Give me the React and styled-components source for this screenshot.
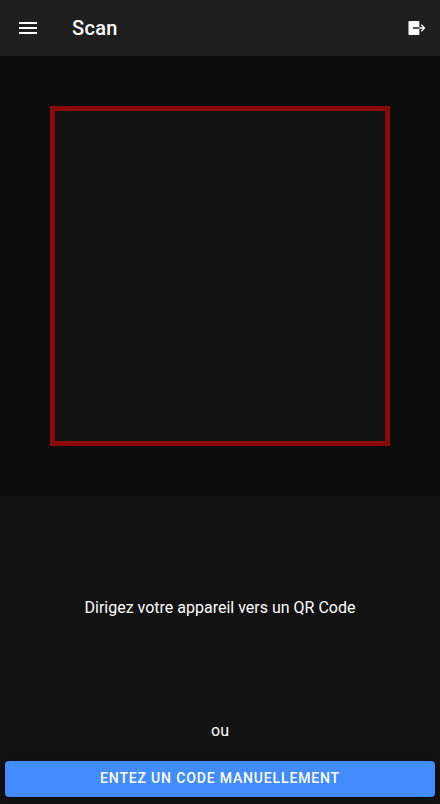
import React from "react";
import styled, { createGlobalStyle } from "styled-components";

const GlobalStyle = createGlobalStyle`
  * { box-sizing: border-box; }
  body { margin: 0; background: #121212; font-family: Roboto, sans-serif; color: #fff; }
`;
const Page = styled.div`
  display: flex;
  flex-direction: column;
  height: 100vh;
  overflow: hidden;
`;
const Toolbar = styled.header`
  flex: none;
  display: flex;
  align-items: center;
  height: 56px;
  padding: 0 13px 0 16px;
  background: #1f1f1f;
`;
const Title = styled.h1`
  flex: 1;
  margin: 0 0 0 32px;
  font-size: 20px;
  font-weight: 500;
  line-height: 24px;
  letter-spacing: 0.3px;
`;
const IconButton = styled.button`
  display: flex;
  padding: 0;
  border: 0;
  background: none;
  color: #fff;
`;
const Viewfinder = styled.div`
  flex: none;
  height: 440px;
  border: 50px solid #0d0d0d;
`;
const Target = styled.div`
  height: 340px;
  border: 5px solid #890909;
`;
const Message = styled.p`
  flex: 1;
  display: flex;
  align-items: center;
  justify-content: center;
  margin: 0;
  padding-bottom: 2px;
  font-size: 16px;
  line-height: 20px;
`;
const Separator = styled.p`
  flex: none;
  margin: 0 0 20px;
  text-align: center;
  font-size: 16px;
  line-height: 20px;
`;
const Action = styled.button`
  flex: none;
  height: 36px;
  margin: 0 5px 7px;
  padding: 0 0 2px;
  border: 0;
  border-radius: 4px;
  background: #428cff;
  color: #fff;
  font: 500 14px Roboto, sans-serif;
  letter-spacing: 0.84px;
  text-transform: uppercase;
  box-shadow: 0 3px 1px -2px rgba(0,0,0,.2), 0 2px 2px rgba(0,0,0,.14), 0 1px 5px rgba(0,0,0,.12);
`;

export default function App() {
  return (
    <Page>
      <GlobalStyle />
      <Toolbar>
        <IconButton aria-label="Menu">
          <svg width="24" height="24" viewBox="0 0 24 24" fill="currentColor">
            <path d="M3 18h18v-2H3v2zm0-5h18v-2H3v2zm0-7v2h18V6H3z" />
          </svg>
        </IconButton>
        <Title>Scan</Title>
        <IconButton aria-label="Déconnexion">
          <svg width="21" height="20" viewBox="-14 0 525 500" fill="currentColor">
            <path d="M160 234h160V86a12 12 0 0 0-12-12H60a12 12 0 0 0-12 12v328a12 12 0 0 0 12 12h248a12 12 0 0 0 12-12V266H160z" />
            <path d="M320 234h89.37l-52.68-52.69 22.62-22.62L470.63 250l-91.32 91.31-22.62-22.62L409.37 266H320z" />
          </svg>
        </IconButton>
      </Toolbar>
      <Viewfinder><Target /></Viewfinder>
      <Message>Dirigez votre appareil vers un QR Code</Message>
      <Separator>ou</Separator>
      <Action>Entez un code manuellement</Action>
    </Page>
  );
}
